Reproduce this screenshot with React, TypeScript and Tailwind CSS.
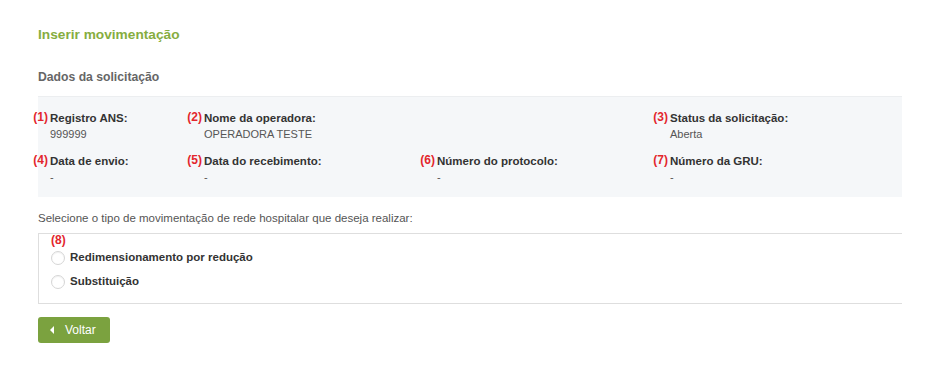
import React from "react";

interface FieldProps {
  num: number;
  label: string;
  value: string;
}

function Field({ num, label, value }: FieldProps) {
  return (
    <div className="relative">
      <span className="absolute right-full mr-[2px] top-[-1px] text-[12px] font-bold text-[#e3262d] leading-[16px]">
        ({num})
      </span>
      <div className="text-[11.5px] font-bold text-[#333] leading-[16px]">{label}</div>
      <div className="text-[11px] text-[#555] leading-[16px]">{value}</div>
    </div>
  );
}

function Radio({ label }: { label: string }) {
  return (
    <label className="flex items-center gap-[5px] h-[24px]">
      <span className="w-[14px] h-[14px] rounded-full border border-[#d6d6d6] bg-white shadow-[inset_0_1px_1px_rgba(0,0,0,0.06)]" />
      <span className="text-[11.5px] font-bold text-[#333]">{label}</span>
    </label>
  );
}

export default function App() {
  return (
    <div className="w-[936px] h-[378px] bg-white font-['Liberation_Sans',Arial,sans-serif] pl-[38px] pr-[34px] pt-[27px]">
      <h1 className="text-[13.7px] font-bold text-[#86ad3f] leading-[16px]">Inserir movimentação</h1>

      <h2 className="mt-[26px] text-[12.2px] font-bold text-[#666] leading-[16px]">Dados da solicitação</h2>

      <div className="mt-[11px] bg-[#f5f7f9] border-t border-[#eceef0] pl-[12px] pt-[13px] pb-[11px] h-[101px]">
        <div className="grid grid-cols-[154px_233px_233px_1fr] gap-y-[11px]">
          <Field num={1} label="Registro ANS:" value="999999" />
          <Field num={2} label="Nome da operadora:" value="OPERADORA TESTE" />
          <div />
          <Field num={3} label="Status da solicitação:" value="Aberta" />
          <Field num={4} label="Data de envio:" value="-" />
          <Field num={5} label="Data do recebimento:" value="-" />
          <Field num={6} label="Número do protocolo:" value="-" />
          <Field num={7} label="Número da GRU:" value="-" />
        </div>
      </div>

      <p className="mt-[13px] text-[11.5px] text-[#555] leading-[16px]">
        Selecione o tipo de movimentação de rede hospitalar que deseja realizar:
      </p>

      <div className="mt-[7px] border-t border-b border-l border-[#dedede] h-[71px] pl-[12px]">
        <div className="text-[12px] font-bold text-[#e3262d] leading-[12px]">(8)</div>
        <Radio label="Redimensionamento por redução" />
        <Radio label="Substituição" />
      </div>

      <button className="mt-[13px] flex items-center gap-[11px] h-[26px] w-[72px] pl-[12px] rounded-[3px] bg-[#7ba23f] text-white text-[12px]">
        <svg width="4" height="8" viewBox="0 0 4 8">
          <path d="M4 0 L0 4 L4 8 Z" fill="white" />
        </svg>
        Voltar
      </button>
    </div>
  );
}
